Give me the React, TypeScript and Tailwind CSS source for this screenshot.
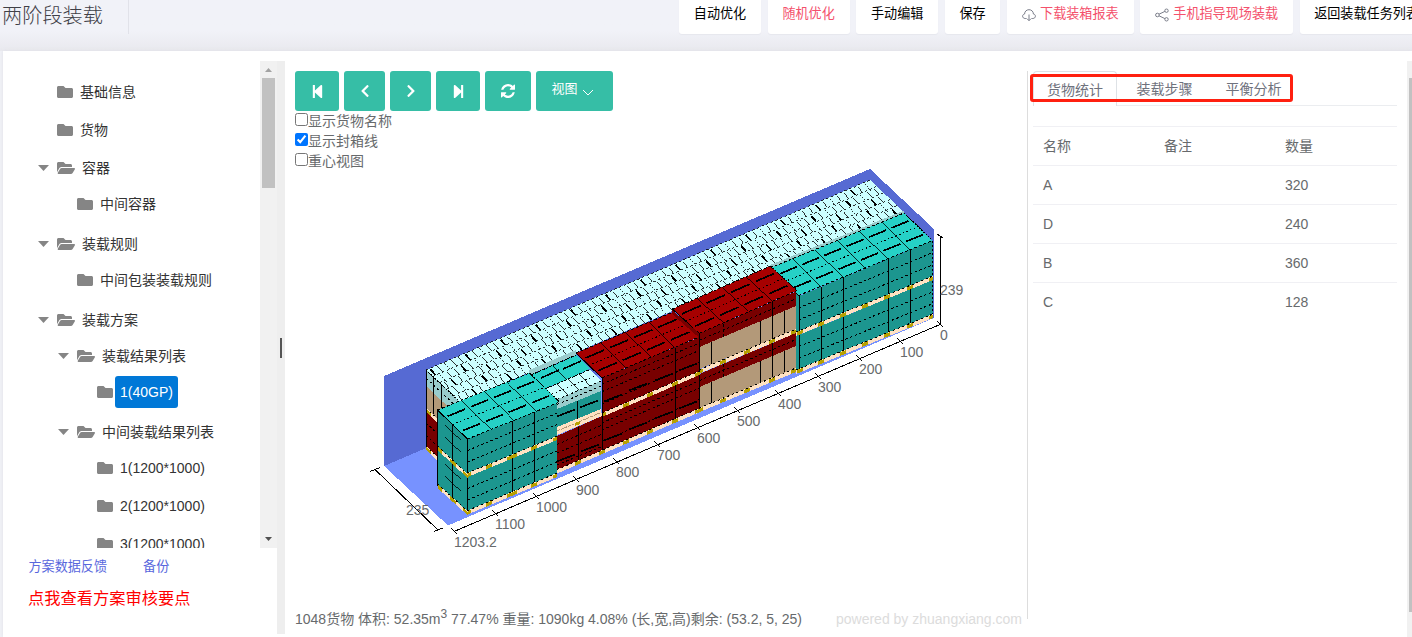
import React from "react";
import { FaFolder, FaFolderOpen, FaStepBackward, FaStepForward, FaChevronLeft, FaChevronRight } from "react-icons/fa";

type Pt = [number, number];

const pts = (list: Pt[]) => list.map((p) => p.join(",")).join(" ");

const Poly = ({ p, fill }: { p: Pt[]; fill: string }) => <polygon points={pts(p)} fill={fill} />;

const Line = ({ a, b, w = 1, dash }: { a: Pt; b: Pt; w?: number; dash?: string }) => (
  <line x1={a[0]} y1={a[1]} x2={b[0]} y2={b[1]} stroke="#000" strokeWidth={w} strokeDasharray={dash} />
);

/* Point inside the parallelogram (origin o, far end e of the long side, width vector w). */
const at = (o: Pt, e: Pt, w: Pt, u: number, v: number): Pt => [
  o[0] + (e[0] - o[0]) * u + w[0] * v,
  o[1] + (e[1] - o[1]) * u + w[1] * v,
];

const TopFace = ({ o, e, w, cols, fill }: { o: Pt; e: Pt; w: Pt; cols: number; fill: string }) => {
  const cells = Array.from({ length: cols }, (_, i) => i);
  return (
    <g>
      <Poly p={[o, e, at(o, e, w, 1, 1), at(o, e, w, 0, 1)]} fill={fill} />
      <Line a={o} b={e} dash="3 2" />
      <Line a={at(o, e, w, 0, 0.5)} b={at(o, e, w, 1, 0.5)} dash="1.500 2.500" />
      <Line a={at(o, e, w, 0, 1)} b={at(o, e, w, 1, 1)} dash="3 2" />
      <Line a={o} b={at(o, e, w, 0, 1)} />
      <Line a={e} b={at(o, e, w, 1, 1)} dash="2 1" />
      {cells.map((i) => (
        <g key={i}>
          {i > 0 && <Line a={at(o, e, w, i / cols, 0)} b={at(o, e, w, i / cols, 1)} w={0.8} />}
          {[0.25, 0.75].map((v) => (
            <Line key={v} a={at(o, e, w, (i + 0.12) / cols, v)} b={at(o, e, w, (i + 0.88) / cols, v)} w={1.7} />
          ))}
        </g>
      ))}
    </g>
  );
};

/* Vertical face: upper edge a-b, heights ha and hb, dotted layer seams at the given fractions. */
const Side = ({ a, b, ha, hb, fill, seams = [] }: { a: Pt; b: Pt; ha: number; hb: number; fill: string; seams?: number[] }) => (
  <g>
    <Poly p={[a, b, [b[0], b[1] + hb], [a[0], a[1] + ha]]} fill={fill} />
    {seams.map((s) => (
      <Line key={s} a={[a[0], a[1] + ha * s]} b={[b[0], b[1] + hb * s]} dash="2.500 2.500" />
    ))}
  </g>
);

const Pallet = ({ a, b, h = 4, marks }: { a: Pt; b: Pt; h?: number; marks: number[] }) => {
  const y = (x: number) => a[1] + ((b[1] - a[1]) * (x - a[0])) / (b[0] - a[0]);
  return (
    <g>
      <Poly p={[a, b, [b[0], b[1] + h], [a[0], a[1] + h]]} fill="#ffe2c2" />
      <Line a={a} b={b} dash="2 3" />
      {marks.map((m) => {
        const l = Math.max(a[0], m - 3);
        const r = Math.min(b[0], m + 3);
        return <Poly key={m} p={[[l, y(l) + 0.5], [r, y(r) + 0.5], [r, y(r) + h], [l, y(l) + h]]} fill="#b8a000" />;
      })}
    </g>
  );
};

const CYAN = "#ccffff";
const CYAN_SIDE = "#99cccc";
const TEAL = "#26d1c6";
const TEAL_SIDE = "#1c968f";
const RED = "#a60000";
const RED_SIDE = "#780000";
const TAN = "#b39979";

const CyanTop = () => {
  const o: Pt = [426, 370];
  const e: Pt = [870, 180];
  const w: Pt = [34, 32];
  const rows = 5;
  const step = 7 / 444;
  const marks: React.ReactNode[] = [];
  for (let r = 0; r < rows; r++) {
    for (let i = 0; i < 64; i++) {
      const u = (i + 0.5 + (r % 2) * 0.4) * step;
      if (u > 0.995) continue;
      const k = (i + r * 2) % 5;
      const v0 = r / rows;
      const s: Pt = at(o, e, w, u, v0 + 0.03);
      marks.push(
        <Line
          key={`${r}-${i}`}
          a={s}
          b={[s[0] + (k === 2 ? 6.5 : 5), s[1] + (k === 2 ? 7 : 5.5)]}
          w={k === 0 ? 1.7 : 0.8}
          dash={k === 2 ? "1.500 1.500" : undefined}
        />,
      );
    }
  }
  return (
    <g>
      <Poly p={[o, e, at(o, e, w, 1, 1), at(o, e, w, 0, 1)]} fill={CYAN} />
      {[0, 1, 2, 3, 4].map((r) => (
        <Line key={r} a={at(o, e, w, 0, r / rows)} b={at(o, e, w, 1, r / rows)} w={0.8} dash="2.500 2.500" />
      ))}
      {marks}
      <Line a={o} b={at(o, e, w, 0, 1)} dash="2 1" />
    </g>
  );
};

const frontDashes: Pt[] = [
  [613, 398], [638, 387], [664, 377], [688, 367],
  [613, 437], [638, 426], [664, 415], [688, 405],
  [566, 458], [590, 448],
  [566, 413], [589, 404],
];

const ticks: [number, number, string][] = [
  [940, 324, "0"], [900, 341, "100"], [859, 358, "200"], [818, 376, "300"],
  [778, 393, "400"], [737, 410, "500"], [697, 427, "600"], [657, 444, "700"],
  [616, 461, "800"], [576, 479, "900"], [536, 496, "1000"], [495, 513, "1100"],
  [454, 531, "1203.2"],
];

const CargoView = () => (
  <svg viewBox="285 171 742 430" className="block h-[430px] w-[742px] shrink-0 overflow-visible">
    <g shapeRendering="crispEdges">
      <Poly p={[[384, 376], [870, 169], [934, 229], [934, 318], [870, 259], [384, 466]]} fill="#566ad3" />
      <Poly p={[[384, 466], [870, 259], [934, 318], [448, 525.5]]} fill="#7792ff" />

      {/* rear row, end face */}
      <Side a={[426, 370]} b={[460, 402]} ha={16} hb={16} fill={CYAN_SIDE} seams={[0.5]} />
      <Side a={[426, 386]} b={[460, 418]} ha={22} hb={22} fill={TAN} />
      <Side a={[426, 412]} b={[460, 444]} ha={36} hb={36} fill={RED_SIDE} seams={[0.3, 0.65]} />
      <Pallet a={[426, 408]} b={[460, 440]} marks={[428]} />
      <Pallet a={[426, 446]} b={[460, 478]} marks={[428]} />
      <Line a={[426.5, 370]} b={[426.5, 447]} />
      <Line a={[433.5, 377]} b={[433.5, 414]} />
      <Line a={[441.5, 385]} b={[441.5, 412]} />
      <CyanTop />

      {/* right teal block */}
      <Poly p={[[770, 265], [904, 210.5], [904, 213], [770, 268]]} fill={CYAN_SIDE} />
      <Poly p={[[795, 291], [800, 296], [800, 373], [795, 369]]} fill={TEAL_SIDE} />
      <Side a={[799, 296]} b={[932.5, 240.5]} ha={36} hb={37} fill={TEAL_SIDE} seams={[0.33, 0.66]} />
      <Side a={[799, 335]} b={[932.5, 280]} ha={35} hb={36} fill={TEAL_SIDE} seams={[0.33, 0.66]} />
      <TopFace o={[770, 268]} e={[904, 213]} w={[28.5, 27.5]} cols={6} fill={TEAL} />
      {[799.5, 821.5, 843.5, 888.5, 910.5].map((x) => (
        <Line key={x} a={[x, 296 - (x - 799) * 0.416]} b={[x, 370 - (x - 799) * 0.412]} />
      ))}
      <Line a={[932.5, 241]} b={[932.5, 315]} dash="2 2" />
      <Pallet a={[796, 332]} b={[933, 276]} marks={[800, 821, 843, 865, 887, 910, 932]} />
      <Pallet a={[796, 370]} b={[933, 314]} marks={[800, 821, 843, 865, 887, 910, 932]} />

      {/* far red stack with tan cartons */}
      <Side a={[699.5, 347]} b={[796, 306]} ha={22} hb={24} fill={TAN} />
      <Side a={[699.5, 333.5]} b={[796, 291.5]} ha={13.5} hb={14.5} fill={RED_SIDE} seams={[0.5]} />
      <Side a={[699.5, 374]} b={[796, 333]} ha={13} hb={13} fill={RED_SIDE} seams={[0.5]} />
      <Side a={[699.5, 387]} b={[796, 346]} ha={21} hb={22} fill={TAN} />
      {[711.5, 760.5, 784.5].map((x) => {
        const d = (x - 699.5) * 0.425;
        return (
          <g key={x}>
            <Line a={[x, 347 - d]} b={[x, 369 - d]} />
            <Line a={[x, 387 - d]} b={[x, 408 - d]} />
          </g>
        );
      })}
      <Line a={[772.5, 302]} b={[772.5, 377]} />
      <Line a={[723.5, 324]} b={[723.5, 338]} dash="3 2" />
      <Line a={[723.5, 364]} b={[723.5, 377]} dash="3 2" />
      <TopFace o={[672.5, 309]} e={[770.5, 266]} w={[26.5, 24.5]} cols={4} fill={RED} />
      <Pallet a={[699.5, 369.5]} b={[796, 329]} marks={[700, 723, 747, 772, 794]} />
      <Pallet a={[699.5, 408]} b={[796, 368]} marks={[700, 723, 747, 772, 794]} />

      {/* near red stack */}
      <Side a={[602, 378]} b={[699.5, 337]} ha={36} hb={35} fill={RED_SIDE} seams={[0.17, 0.38, 0.72]} />
      <Side a={[602, 417]} b={[699.5, 375]} ha={34} hb={34} fill={RED_SIDE} seams={[0.17, 0.38, 0.72]} />
      <TopFace o={[576, 353]} e={[673, 312]} w={[26, 25]} cols={4} fill={RED} />
      <Poly p={[[672, 310], [699.5, 333.5], [699.5, 338], [672, 314]]} fill={RED_SIDE} />
      <Line a={[699.5, 334]} b={[699.5, 410]} />
      <Line a={[675.5, 348]} b={[675.5, 420]} />
      <Pallet a={[602, 413]} b={[699.5, 371]} marks={[603, 626, 650, 675, 698]} />

      {/* small teal and pale stack */}
      <Poly p={[[529, 370], [576, 350], [576, 355], [529, 375]]} fill={CYAN_SIDE} />
      <Poly p={[[531, 375], [576, 355], [590.5, 368.5], [545.5, 388.5]]} fill={TEAL} />
      <Line a={[531, 375]} b={[576, 355]} dash="3 1" />
      <Line a={[553.5, 366]} b={[566, 379]} w={0.8} />
      <Line a={[541, 378]} b={[559, 370]} w={1.7} />
      <Line a={[563, 369]} b={[581, 361]} w={1.7} />
      <Poly p={[[529, 373], [545.5, 388.5], [557, 402], [548, 396]]} fill={TEAL_SIDE} />
      <Poly p={[[546, 388.5], [590, 369.5], [601, 381], [557, 399.5]]} fill={CYAN} />
      <Line a={[546, 388.5]} b={[590, 369.5]} dash="3 1" />
      <Line a={[552, 394]} b={[595, 376]} dash="1.500 2.500" />
      {[0.25, 0.5, 0.75].map((u) => (
        <Line key={u} a={[546 + 44 * u, 388.5 - 19 * u]} b={[557 + 44 * u, 399.5 - 18.5 * u]} w={0.8} />
      ))}
      <Side a={[557, 399.5]} b={[601, 381]} ha={10} hb={10} fill={CYAN_SIDE} seams={[0, 0.5]} />
      <Side a={[557, 409]} b={[601, 391]} ha={18} hb={18} fill={TEAL_SIDE} />
      <Line a={[577.5, 401]} b={[577.5, 419]} />
      <Side a={[557, 436]} b={[602, 416]} ha={34} hb={36} fill={RED_SIDE} seams={[0.25, 0.5, 0.85]} />
      <Poly p={[[557, 427], [601, 409], [602, 416], [557, 435]]} fill="#ffe2c2" />
      <line x1="557" y1="431" x2="601" y2="412.5" stroke="#b39979" strokeDasharray="3 1" />
      <Poly p={[[575, 423], [580, 421], [580, 424], [575, 426]]} fill="#b8a000" />
      <Line a={[578.5, 427]} b={[578.5, 462]} />
      <Line a={[602.5, 378]} b={[602.5, 452]} />
      <Pallet a={[557, 469.5]} b={[700, 408]} marks={[578, 602, 626, 650, 675, 698]} />
      {frontDashes.map(([x, y]) => (
        <Line key={`${x}-${y}`} a={[x - 9, y + 3.5]} b={[x + 9, y - 3.5]} w={1.7} />
      ))}

      {/* near teal block */}
      <Side a={[437.5, 410]} b={[467.5, 439]} ha={36} hb={35} fill={TEAL_SIDE} />
      <Side a={[437.5, 449]} b={[467.5, 477]} ha={35} hb={35} fill={TEAL_SIDE} />
      {[418, 430, 457, 469].map((y) => (
        <g key={y}>
          <Line a={[445, y + 7]} b={[453, y + 15]} w={0.8} />
          <Line a={[453, y + 15]} b={[461, y + 22]} w={0.8} />
        </g>
      ))}
      <Side a={[467.5, 439]} b={[557, 402]} ha={35} hb={34} fill={TEAL_SIDE} seams={[0.33, 0.66]} />
      <Side a={[467.5, 477]} b={[557, 440]} ha={35} hb={33} fill={TEAL_SIDE} seams={[0.33, 0.66]} />
      <TopFace o={[437.5, 410]} e={[529.5, 373]} w={[30, 29]} cols={4} fill={TEAL} />
      <Line a={[437.5, 410]} b={[437.5, 486]} />
      <Line a={[452.5, 425]} b={[452.5, 500]} />
      <Line a={[467.5, 439]} b={[467.5, 512]} />
      <Line a={[512.5, 421]} b={[512.5, 493]} />
      <Line a={[534.5, 412]} b={[534.5, 484]} />
      <Pallet a={[437.5, 446]} b={[467.5, 474]} marks={[439, 453, 466]} />
      <Pallet a={[437.5, 484]} b={[467.5, 511]} marks={[439, 453, 466]} />
      <Pallet a={[467.5, 473]} b={[557, 436]} marks={[468, 489, 510, 514, 534, 556]} />
      <Pallet a={[467.5, 510.5]} b={[557, 473]} marks={[468, 489, 510, 514, 534, 556]} />

      {/* dimension lines */}
      <Line a={[375, 469.5]} b={[438, 530]} />
      <Line a={[370, 471.5]} b={[380, 467.5]} />
      <Line a={[434, 531.5]} b={[443, 528]} />
      <Line a={[454, 531.5]} b={[940, 324.5]} />
      <Line a={[940.5, 236]} b={[940.5, 325]} />
      <Line a={[937, 234]} b={[943, 238]} />
      {ticks.map(([x, y]) => (
        <Line key={x} a={[x - 3, y - 3]} b={[x + 3, y + 3]} />
      ))}
    </g>
    <g fontSize="14" fill="#676a6c">
      {ticks.map(([x, y, label]) => (
        <text key={label} x={x} y={y + 15.5}>{label}</text>
      ))}
      <text x="940" y="295">239</text>
      <text x="406" y="515">235</text>
    </g>
  </svg>
);

type Node = { label: string; depth: number; open?: boolean; selected?: boolean; gap: string };

const tree: Node[] = [
  { label: "基础信息", depth: 0, gap: "mt-0" },
  { label: "货物", depth: 0, gap: "mt-1.5" },
  { label: "容器", depth: 0, open: true, gap: "mt-1.5" },
  { label: "中间容器", depth: 1, gap: "mt-1" },
  { label: "装载规则", depth: 0, open: true, gap: "mt-2" },
  { label: "中间包装装载规则", depth: 1, gap: "mt-1" },
  { label: "装载方案", depth: 0, open: true, gap: "mt-2" },
  { label: "装载结果列表", depth: 1, open: true, gap: "mt-1" },
  { label: "1(40GP)", depth: 2, selected: true, gap: "mt-1" },
  { label: "中间装载结果列表", depth: 1, open: true, gap: "mt-2" },
  { label: "1(1200*1000)", depth: 2, gap: "mt-1" },
  { label: "2(1200*1000)", depth: 2, gap: "mt-1.5" },
  { label: "3(1200*1000)", depth: 2, gap: "mt-1.5" },
];

const indent = ["pl-[35px]", "pl-[55px]", "pl-[75px]"];

const TreeRow = ({ n }: { n: Node }) => (
  <div className={`flex h-8 shrink-0 items-center ${indent[n.depth]} ${n.gap}`}>
    <span className="flex w-[19px] shrink-0">
      {n.open && (
        <svg width="11" height="6" viewBox="0 0 11 6" className="mb-px"><path d="M0 0h11L5.5 6z" fill="#858585" /></svg>
      )}
    </span>
    {n.open ? <FaFolderOpen className="h-4 w-[18px] shrink-0 text-[#858585]" /> : <FaFolder className="h-4 w-4 shrink-0 text-[#858585]" />}
    <span className={`ml-0.5 flex h-8 items-center whitespace-nowrap rounded-[3px] px-[5px] ${n.selected ? "bg-[#0078d7] text-white" : "text-[#333]"}`}>
      {n.label}
    </span>
  </div>
);

const HeaderButton = ({ label, width, red, icon }: { label: string; width: string; red?: boolean; icon?: React.ReactNode }) => (
  <div className={`flex h-[34px] shrink-0 items-center justify-center gap-1 whitespace-nowrap rounded-b-[3px] bg-white pb-[5px] text-[13.1px] shadow-[0_1px_1px_#e6e7ee] ${width} ${red ? "text-[#f4516c]" : "text-black"}`}>
    {icon}
    {label}
  </div>
);

const CloudIcon = () => (
  <svg width="14" height="14" viewBox="0 0 14 14" fill="none" stroke="#7b7e8a" strokeWidth="1">
    <path d="M4.5 10.5H3.2C1.7 10.5.6 9.5.6 8.2c0-1.2.9-2 2-2.2C2.6 3.4 4.6 1.7 7 1.7s4.4 1.7 4.4 4.3c1.2.2 2 1 2 2.2 0 1.3-1.1 2.3-2.6 2.3H9.5" />
    <path d="M7 6.5v6M5 10.7l2 2 2-2" />
  </svg>
);

const ShareIcon = () => (
  <svg width="14" height="14" viewBox="0 0 14 14" fill="none" stroke="#7b7e8a" strokeWidth="1">
    <circle cx="2.4" cy="7" r="1.8" />
    <circle cx="11.5" cy="2.7" r="1.7" />
    <circle cx="11.5" cy="11.3" r="1.7" />
    <path d="M4 6.2l5.9-2.8M4 7.8l5.9 2.8" />
  </svg>
);

const RefreshIcon = () => (
  <svg width="14" height="14" viewBox="0 0 1536 1536" fill="currentColor">
    <path d="M1511 928q0 5-1 7-64 268-268 434.500t-478 166.500q-146 0-282.500-55t-243.500-157l-129 129q-19 19-45 19t-45-19-19-45v-448q0-26 19-45t45-19h448q26 0 45 19t19 45-19 45l-137 137q71 66 161 102t187 36q134 0 250-65t186-179q11-17 53-117 8-23 30-23h192q13 0 22.500 9.500t9.500 22.500zm25-800v448q0 26-19 45t-45 19h-448q-26 0-45-19t-19-45 19-45l138-138q-148-137-349-137-134 0-250 65t-186 179q-11 17-53 117-8 23-30 23h-199q-13 0-22.500-9.500t-9.500-22.500v-7q65-268 270-434.500t480-166.500q146 0 284 55.500t245 156.500l130-129q19-19 45-19t45 19 19 45z" />
  </svg>
);

const ToolButton = ({ width, children }: { width: string; children: React.ReactNode }) => (
  <button className={`flex h-10 shrink-0 items-center justify-center rounded-[3px] bg-[#36bea6] text-white ${width}`}>{children}</button>
);

const Check = ({ label, checked = false }: { label: string; checked?: boolean }) => (
  <label className="flex h-5 items-center">
    <input type="checkbox" defaultChecked={checked} className="mb-[3px] h-[13px] w-[13px] shrink-0" />
    <span className="leading-5">{label}</span>
  </label>
);

const rows: [string, string][] = [["A", "320"], ["D", "240"], ["B", "360"], ["C", "128"]];

export default function App() {
  return (
    <div className="flex h-[637px] w-[1412px] flex-col overflow-hidden bg-[#f1f2f7] font-['Liberation_Sans','Noto_Sans_CJK_SC',sans-serif] text-sm text-[#676a6c]">
      <header className="flex h-[51px] shrink-0 items-start bg-linear-to-b from-[#f1f2f8] from-60% to-[#e9e9ee]">
        <div className="flex h-[34px] w-[129px] shrink-0 items-center whitespace-nowrap border-r border-[#e1e2e9] pb-0.5 pl-0.5 text-[20.200px] font-light text-[#3f4047]">
          两阶段装载
        </div>
        <div className="ml-[550px] flex shrink-0 gap-[6.6px]">
          <HeaderButton label="自动优化" width="w-[82px]" />
          <HeaderButton label="随机优化" width="w-[82px]" red />
          <HeaderButton label="手动编辑" width="w-[82px]" />
          <HeaderButton label="保存" width="w-[55.5px]" />
          <HeaderButton label="下载装箱报表" width="w-[127px]" red icon={<CloudIcon />} />
          <HeaderButton label="手机指导现场装载" width="w-[152.5px]" red icon={<ShareIcon />} />
          <HeaderButton label="返回装载任务列表" width="w-[134px]" />
        </div>
      </header>

      <main className="ml-[3px] flex h-[586px] bg-white pt-2.5 shadow-[0_0_4px_#dfdfe6]">
        <aside className="flex w-[274px] shrink-0 flex-col">
          <div className="flex h-[487px] shrink-0">
            <div className="flex w-[257px] flex-col overflow-hidden pt-[15px]">
              {tree.map((n) => <TreeRow key={n.label + n.depth} n={n} />)}
            </div>
            <div className="flex w-[17px] flex-col items-center bg-[#f1f1f1]">
              <svg width="17" height="17" viewBox="0 0 17 17"><path d="M5 11h7L8.5 7z" fill="#a3a3a3" /></svg>
              <div className="h-[110px] w-[13px] bg-[#c1c1c1]" />
              <svg width="17" height="17" viewBox="0 0 17 17" className="mt-auto"><path d="M5 6h7L8.5 10z" fill="#505050" /></svg>
            </div>
          </div>
          <div className="flex h-[38px] items-center gap-9 pl-[25.5px] pt-px text-[13.1px] text-[#5867dd]">
            <a>方案数据反馈</a>
            <a>备份</a>
          </div>
          <div className="pl-[25px] text-[16.250px] leading-6 text-[#ff0000]">点我查看方案审核要点</div>
        </aside>

        <div className="flex h-[573px] w-2 shrink-0 justify-center bg-[#eee] pt-[277px]">
          <div className="h-5 w-0.5 bg-[#555]" />
        </div>

        <section className="flex w-[742px] shrink-0 flex-col pt-2.5">
          <div className="flex h-10 shrink-0 gap-[5px] pl-2.5">
            <ToolButton width="w-11"><FaStepBackward size={15} /></ToolButton>
            <ToolButton width="w-[41px]"><FaChevronLeft size={14} /></ToolButton>
            <ToolButton width="w-[41px]"><FaChevronRight size={14} /></ToolButton>
            <ToolButton width="w-11"><FaStepForward size={15} /></ToolButton>
            <ToolButton width="w-[46px]"><RefreshIcon /></ToolButton>
            <ToolButton width="w-[77px]">
              <span className="mb-[3px] text-[13px]">视图</span>
              <svg width="12" height="7" viewBox="0 0 12 7" className="ml-1 mr-1 mt-0.5" fill="none" stroke="#fff"><path d="M1 1l5 5 5-5" /></svg>
            </ToolButton>
          </div>
          <div className="flex h-[60px] shrink-0 flex-col pl-2.5">
            <Check label="显示货物名称" />
            <Check label="显示封箱线" checked />
            <Check label="重心视图" />
          </div>
          <CargoView />
          <div className="flex h-[36px] items-center justify-between whitespace-nowrap pl-2.5 pr-[5px]">
            <div>1048货物 体积: 52.35m<sup className="text-[12px]">3</sup> 77.47% 重量: 1090kg 4.08% (长,宽,高)剩余: (53.2, 5, 25)</div>
            <div className="text-[#dcdcdc]">powered by zhuangxiang.com</div>
          </div>
        </section>

        <section className="relative mt-2.5 flex h-[548px] w-[380px] shrink-0 flex-col border-l border-[#ddd] pl-[5px]">
          <div className="flex h-[35px] w-[364px]">
            <div className="flex w-[84px] shrink-0 items-center justify-center rounded-t border border-b-0 border-[#dee2e6] pt-px text-[#6f727d]">货物统计</div>
            <div className="flex flex-1 items-center gap-[33px] border-b border-[#ebedf0] pl-[19.5px] pt-0.5 text-[#6f727d]">
              <span>装载步骤</span>
              <span>平衡分析</span>
            </div>
          </div>
          <div className="absolute left-[2px] top-[3px] h-7 w-[263px] rounded-[3px] border-3 border-[#ff2010]" />
          <div className="mt-5 w-[364px]">
            <div className="grid h-[39px] grid-cols-[121px_121px_1fr] items-center border-t border-[#f0f0f4] pl-2.5">
              <span>名称</span>
              <span>备注</span>
              <span>数量</span>
            </div>
            {rows.map(([name, count]) => (
              <div key={name} className="grid h-[39px] grid-cols-[121px_121px_1fr] items-center border-t border-[#f0f0f4] pl-2.5">
                <span>{name}</span>
                <span />
                <span>{count}</span>
              </div>
            ))}
          </div>
        </section>

        <div className="h-[576px] w-[5px] shrink-0 bg-[#f1f1f1] pl-0.5 pt-[17px]">
          <div className="h-[534px] bg-[#c1c1c1]" />
        </div>
      </main>
    </div>
  );
}
